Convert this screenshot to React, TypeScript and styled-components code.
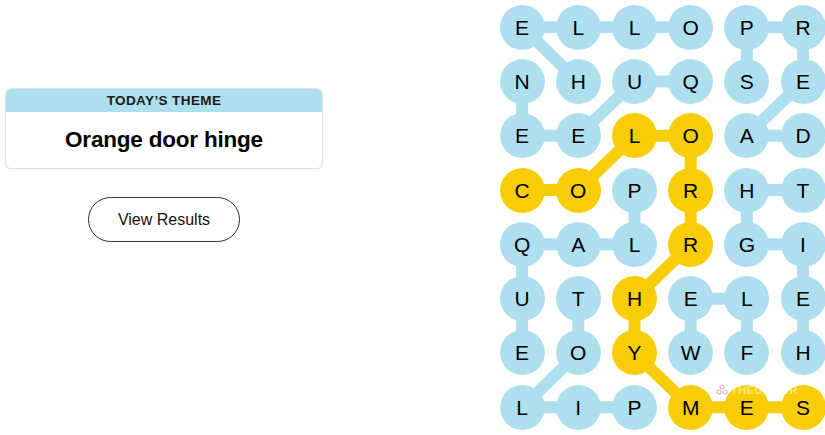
import React from "react";
import styled, { createGlobalStyle } from "styled-components";

const GlobalStyle = createGlobalStyle`
  html, body { margin: 0; padding: 0; background: #ffffff; overflow: hidden; }
  body { font-family: "Liberation Sans", Arial, sans-serif; color: #121212; }
`;

const BLUE = "#aedfee";
const YELLOW = "#f8cd05";
const COL_W = 56.2;
const ROW_H = 54.3;

const LETTERS = [
  "ELLOPR",
  "NHUQSE",
  "EELOAD",
  "COPRHT",
  "QALRGI",
  "UTHELE",
  "EOYWFH",
  "LIPMES",
];

type P = [number, number];
const BLUE_EDGES: [P, P][] = [
  [[0, 0], [0, 1]], [[0, 1], [0, 2]], [[0, 2], [0, 3]], [[0, 4], [0, 5]],
  [[0, 0], [1, 1]], [[0, 4], [1, 4]], [[0, 5], [1, 5]],
  [[1, 0], [2, 0]], [[1, 2], [1, 3]], [[1, 2], [2, 1]], [[2, 0], [2, 1]],
  [[1, 5], [2, 4]], [[2, 4], [2, 5]],
  [[3, 4], [3, 5]], [[3, 4], [4, 4]], [[3, 2], [4, 2]],
  [[4, 4], [4, 5]], [[4, 0], [4, 1]], [[4, 1], [4, 2]],
  [[4, 0], [5, 0]], [[5, 0], [6, 0]],
  [[4, 5], [5, 5]], [[5, 5], [6, 5]],
  [[5, 1], [6, 1]], [[6, 1], [7, 0]], [[7, 0], [7, 1]], [[7, 1], [7, 2]],
  [[5, 3], [5, 4]], [[5, 3], [6, 3]], [[5, 4], [6, 4]],
];
const YELLOW_PATH: P[] = [
  [3, 0], [3, 1], [2, 2], [2, 3], [3, 3], [4, 3], [5, 2], [6, 2], [7, 3], [7, 4], [7, 5],
];
const yellowSet = new Set(YELLOW_PATH.map(([r, c]) => `${r}-${c}`));

const Page = styled.main`
  display: flex;
  width: 825px;
  height: 435px;
`;

const Side = styled.section`
  width: 494px;
  flex: none;
  box-sizing: border-box;
  padding: 88px 0 0 5px;
`;

const SideInner = styled.div`
  width: 318px;
  display: flex;
  flex-direction: column;
  align-items: center;
`;

const ThemeCard = styled.div`
  width: 100%;
  box-sizing: border-box;
  border: 1px solid #e2e2e2;
  border-radius: 6px;
  overflow: hidden;
  box-shadow: 0 1px 3px rgba(0, 0, 0, 0.06);
  background: #fff;
`;

const ThemeHeader = styled.div`
  height: 23px;
  background: ${BLUE};
  display: flex;
  align-items: center;
  justify-content: center;
  font-size: 13.5px;
  font-weight: 700;
  letter-spacing: 0.4px;
  color: #1a1a1a;
`;

const ThemeTitle = styled.div`
  height: 56px;
  display: flex;
  align-items: center;
  justify-content: center;
  font-size: 22.5px;
  font-weight: 700;
  color: #000;
  letter-spacing: -0.2px;
`;

const ResultsButton = styled.button`
  margin-top: 28px;
  width: 152px;
  height: 45px;
  border: 1px solid #333;
  border-radius: 23px;
  background: #fff;
  font-family: "Liberation Sans", Arial, sans-serif;
  font-size: 16px;
  color: #121212;
  padding: 1px 0 0;
  cursor: pointer;
`;

const Board = styled.section`
  position: relative;
  flex: none;
  width: ${COL_W * 6}px;
  height: ${ROW_H * 8}px;
`;

const Connectors = styled.svg`
  position: absolute;
  inset: 0;
  width: 100%;
  height: 100%;
  pointer-events: none;
`;

const Grid = styled.div`
  position: relative;
  display: grid;
  grid-template-columns: repeat(6, ${COL_W}px);
  grid-template-rows: repeat(8, ${ROW_H}px);
`;

const Cell = styled.div`
  display: flex;
  align-items: center;
  justify-content: center;
`;

const Letter = styled.div<{ $found: "blue" | "yellow" }>`
  width: 45px;
  height: 45px;
  border-radius: 50%;
  background: ${(p) => (p.$found === "yellow" ? YELLOW : BLUE)};
  display: flex;
  align-items: center;
  justify-content: center;
  font-size: 21px;
  color: #000;
  line-height: 1;
`;

const Watermark = styled.div`
  position: absolute;
  left: 222px;
  top: 384px;
  display: flex;
  align-items: center;
  gap: 3px;
  font-size: 11px;
  line-height: 12px;
  font-weight: 700;
  letter-spacing: 0.5px;
  color: rgba(255, 255, 255, 0.5);
  pointer-events: none;
`;

const cx = (c: number) => c * COL_W + COL_W / 2;
const cy = (r: number) => r * ROW_H + ROW_H / 2;

export default function App() {
  return (
    <>
      <GlobalStyle />
      <Page>
        <Side>
          <SideInner>
            <ThemeCard>
              <ThemeHeader>TODAY’S THEME</ThemeHeader>
              <ThemeTitle>Orange door hinge</ThemeTitle>
            </ThemeCard>
            <ResultsButton>View Results</ResultsButton>
          </SideInner>
        </Side>
        <Board>
          <Connectors viewBox={`0 0 ${COL_W * 6} ${ROW_H * 8}`}>
            {BLUE_EDGES.map(([a, b], i) => (
              <line
                key={i}
                x1={cx(a[1])}
                y1={cy(a[0])}
                x2={cx(b[1])}
                y2={cy(b[0])}
                stroke={BLUE}
                strokeWidth={12}
              />
            ))}
            <polyline
              points={YELLOW_PATH.map(([r, c]) => `${cx(c)},${cy(r)}`).join(" ")}
              fill="none"
              stroke={YELLOW}
              strokeWidth={12}
              strokeLinejoin="round"
            />
          </Connectors>
          <Grid>
            {LETTERS.map((row, r) =>
              row.split("").map((ch, c) => (
                <Cell key={`${r}-${c}`}>
                  <Letter $found={yellowSet.has(`${r}-${c}`) ? "yellow" : "blue"}>{ch}</Letter>
                </Cell>
              ))
            )}
          </Grid>
          <Watermark>
            <svg width="12" height="12" viewBox="0 0 12 12">
              <g fill="none" stroke="rgba(230,150,170,0.7)" strokeWidth="1.2">
                <circle cx="6" cy="3" r="2" />
                <circle cx="3" cy="8" r="2" />
                <circle cx="9" cy="8" r="2" />
              </g>
            </svg>
            THEGAMER
          </Watermark>
        </Board>
      </Page>
    </>
  );
}
